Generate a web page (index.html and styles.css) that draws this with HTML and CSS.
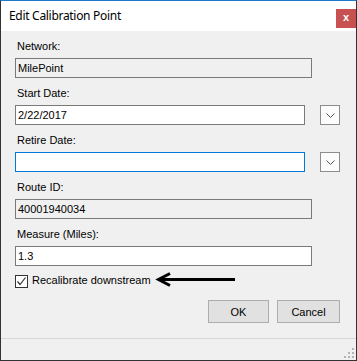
FILE: index.html
```html
<!DOCTYPE html>
<html lang="en">
<head>
  <meta charset="UTF-8" />
  <title>Edit Calibration Point</title>
  <link rel="stylesheet" href="styles.css">
</head>
<body>

  <div class="janela">
    <div class="titulo">
      <span class="titulo-texto">Edit Calibration Point</span>
      <span class="fechar">x</span>
    </div>

    <div class="conteudo">
      <div class="campo">
        <label>Network:</label>
        <div class="caixa somente-leitura">MilePoint</div>
      </div>

      <div class="campo">
        <label>Start Date:</label>
        <div class="linha">
          <div class="caixa">2/22/2017</div>
          <span class="seta-baixo">
            <svg width="9" height="5" viewBox="0 0 9 5"><path d="M0.5 0.5 L4.5 4.5 L8.5 0.5" fill="none" stroke="#555" stroke-width="1"/></svg>
          </span>
        </div>
      </div>

      <div class="campo">
        <label>Retire Date:</label>
        <div class="linha">
          <div class="caixa foco"></div>
          <span class="seta-baixo">
            <svg width="9" height="5" viewBox="0 0 9 5"><path d="M0.5 0.5 L4.5 4.5 L8.5 0.5" fill="none" stroke="#555" stroke-width="1"/></svg>
          </span>
        </div>
      </div>

      <div class="campo">
        <label>Route ID:</label>
        <div class="caixa somente-leitura">40001940034</div>
      </div>

      <div class="campo">
        <label>Measure (Miles):</label>
        <div class="caixa">1.3</div>
      </div>

      <div class="marcar">
        <span class="checkbox">
          <svg width="11" height="11" viewBox="0 0 11 11"><path d="M1.5 5.5 L4 8.5 L9.5 1.5" fill="none" stroke="#333" stroke-width="1.2"/></svg>
        </span>
        <span class="marcar-texto">Recalibrate downstream</span>
        <svg class="flecha" width="82" height="16" viewBox="0 0 82 16">
          <path d="M3 7.5 H80" stroke="#000" stroke-width="3"/>
          <path d="M15 1.5 L3.5 7.5 L15 13.5" fill="none" stroke="#000" stroke-width="3"/>
        </svg>
      </div>

      <div class="botoes">
        <button>OK</button>
        <button class="cancelar">Cancel</button>
      </div>
    </div>

    <div class="rodape">
      <svg class="grip" width="10" height="10" viewBox="0 0 10 10">
        <rect x="8" y="0" width="2" height="2" fill="#b4b4b4"/>
        <rect x="4" y="4" width="2" height="2" fill="#b4b4b4"/>
        <rect x="8" y="4" width="2" height="2" fill="#b4b4b4"/>
        <rect x="0" y="8" width="2" height="2" fill="#b4b4b4"/>
        <rect x="4" y="8" width="2" height="2" fill="#b4b4b4"/>
        <rect x="8" y="8" width="2" height="2" fill="#b4b4b4"/>
      </svg>
    </div>
  </div>

</body>
</html>
```

FILE: styles.css
```css
body {
  margin: 0;
  font-family: "Liberation Sans", Arial, sans-serif;
  font-size: 11px;
  color: #000;
}

.janela {
  width: 357px;
  height: 361px;
  box-sizing: border-box;
  border: 1px solid #333;
  border-top: 1px solid #1b7bc8;
  background-color: #f0f0f0;
  display: flex;
  flex-direction: column;
}

.titulo {
  height: 30px;
  background-color: #fff;
  display: flex;
  justify-content: space-between;
  align-items: flex-start;
}

.titulo-texto {
  font-family: "Noto Sans", sans-serif;
  font-size: 12px;
  letter-spacing: -0.3px;
  line-height: 30px;
  padding-left: 8px;
}

.fechar {
  width: 20px;
  height: 19px;
  margin-top: 8px;
  background-color: #c75050;
  color: #fff;
  font-weight: bold;
  font-size: 11px;
  line-height: 17px;
  text-align: center;
}

.conteudo {
  flex: 1;
  padding: 9px 16px 0 14px;
}

.campo {
  margin-bottom: 9px;
}

.campo label {
  display: block;
  line-height: 13px;
  padding-left: 2px;
  margin-bottom: 5px;
}

.linha {
  display: flex;
  align-items: flex-start;
  gap: 15px;
}

.caixa {
  width: 297px;
  height: 20px;
  box-sizing: border-box;
  border: 1px solid #7a7a7a;
  background-color: #fff;
  padding-left: 2px;
  line-height: 18px;
}

.somente-leitura {
  background-color: #f0f0f0;
}

.foco {
  border-color: #0078d7;
}

.seta-baixo {
  width: 20px;
  height: 20px;
  box-sizing: border-box;
  border: 1px solid #8c8c8c;
  background-color: #fcfcfc;
  display: flex;
  justify-content: center;
  align-items: center;
}

.marcar {
  display: flex;
  align-items: center;
  height: 13px;
  margin-top: 3px;
}

.checkbox {
  width: 13px;
  height: 13px;
  box-sizing: border-box;
  border: 1px solid #333;
  background-color: #fff;
  display: flex;
  justify-content: center;
  align-items: center;
}

.marcar-texto {
  margin-left: 4px;
  line-height: 13px;
  margin-top: -3px;
}

.flecha {
  margin-left: 4px;
  margin-top: -3px;
}

.botoes {
  display: flex;
  justify-content: flex-end;
  gap: 8px;
  margin-top: 12px;
}

.botoes button {
  width: 61px;
  height: 23px;
  border: 1px solid #adadad;
  background-color: #e1e1e1;
  font-family: "Liberation Sans", Arial, sans-serif;
  font-size: 11px;
  color: #000;
  padding: 0;
}

.botoes .cancelar {
  width: 63px;
}

.rodape {
  height: 22px;
  box-sizing: border-box;
  border-top: 1px solid #d7d7d7;
  display: flex;
  justify-content: flex-end;
  align-items: flex-end;
  padding: 0 2px 2px 0;
}
```
